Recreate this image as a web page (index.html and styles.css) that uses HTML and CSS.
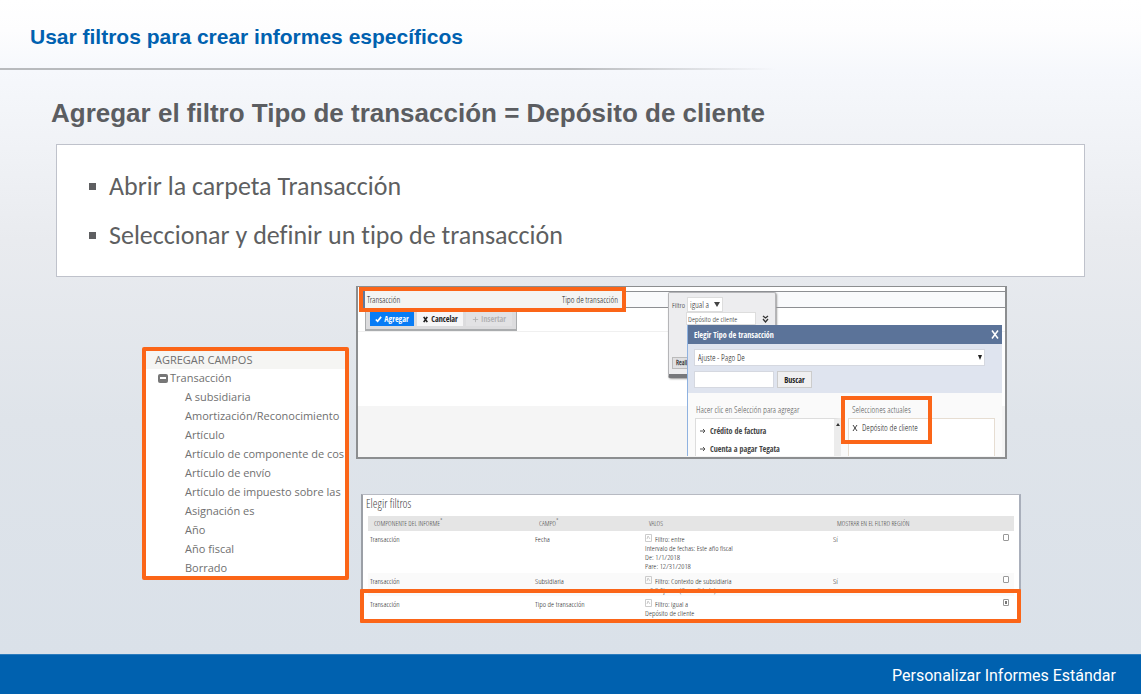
FILE: index.html
```
<!DOCTYPE html>
<html lang="es">
<head>
<meta charset="utf-8">
<meta name="viewport" content="width=device-width, initial-scale=1">
<title>Usar filtros para crear informes específicos</title>
<link rel="stylesheet" href="styles.css">
</head>
<body>
<div class="slide">
  <header class="slide-header">
    <h1 class="slide-title">Usar filtros para crear informes específicos</h1>
  </header>

  <main class="slide-body">
    <h2 class="topic">Agregar el filtro Tipo de transacción = Depósito de cliente</h2>
    <ul class="steps">
      <li>Abrir la carpeta Transacción</li>
      <li>Seleccionar y definir un tipo de transacción</li>
    </ul>

    <div class="figures">
      <section class="fields">
        <h3 class="fields-title">AGREGAR CAMPOS</h3>
        <button class="folder" type="button" aria-expanded="true">
          <svg class="folder-icon" viewBox="0 0 10 9" aria-hidden="true"><rect width="10" height="9" rx="2" fill="#777"/><rect x="2" y="3" width="6" height="2" fill="#fff"/></svg>
          Transacción
        </button>
        <ul class="field-list">
          <li>A subsidiaria</li>
          <li>Amortización/Reconocimiento</li>
          <li>Artículo</li>
          <li>Artículo de componente de cos</li>
          <li>Artículo de envío</li>
          <li>Artículo de impuesto sobre las</li>
          <li>Asignación es</li>
          <li>Año</li>
          <li>Año fiscal</li>
          <li>Borrado</li>
        </ul>
      </section>

      <div class="shots">
        <section class="editor">
          <div class="editor-row">
            <div class="row-highlight"><span>Transacción</span><span>Tipo de transacción</span></div>
            <div class="row-rest"></div>
          </div>
          <div class="toolbar">
            <button class="tool tool-primary" type="button"><svg class="tool-icon" viewBox="0 0 8 8" aria-hidden="true"><path d="M1 4l2 2 4-5" fill="none" stroke="currentColor" stroke-width="2"/></svg>Agregar</button>
            <button class="tool" type="button"><svg class="tool-icon" viewBox="0 0 8 8" aria-hidden="true"><path d="M2 1l4 6M6 1L2 7" fill="none" stroke="currentColor" stroke-width="2"/></svg>Cancelar</button>
            <button class="tool" type="button" disabled><svg class="tool-icon" viewBox="0 0 8 8" aria-hidden="true"><path d="M4 1v6M1 4h6" fill="none" stroke="currentColor"/></svg>Insertar</button>
          </div>
          <div class="editor-blank"></div>
          <div class="editor-base"></div>

          <div class="filter-popup">
            <div class="filter-line">
              <label for="operator">Filtro</label>
              <div class="pick"><select id="operator" class="operator"><option>igual a</option></select><svg class="pick-arrow" viewBox="0 0 6 5" aria-hidden="true"><path d="M0 0h6L3 5z" fill="#444"/></svg></div>
            </div>
            <div class="value-line">
              <input class="filter-value" type="text" value="Depósito de cliente" aria-label="Valor del filtro">
              <svg class="chevrons" viewBox="0 0 7 8" aria-hidden="true"><path d="M1 1l2.500 2L6 1M1 4l2.500 3L6 4" fill="none" stroke="#333" stroke-width="1.300"/></svg>
            </div>
            <button class="popup-button" type="button">Realizar</button>
          </div>

          <div class="dialog" role="dialog" aria-labelledby="dialog-title">
            <div class="dialog-bar">
              <h3 class="dialog-title" id="dialog-title">Elegir Tipo de transacción</h3>
              <button class="close" type="button" aria-label="Cerrar"><svg class="close-icon" viewBox="0 0 8 8" aria-hidden="true"><path d="M1 0l6 8M7 0L1 8" stroke="#fff" stroke-width="1.500"/></svg></button>
            </div>
            <div class="dialog-search">
              <div class="pick"><select class="type-select" aria-label="Tipo"><option>Ajuste - Pago De</option></select><svg class="type-arrow" viewBox="0 0 4 5" aria-hidden="true"><path d="M0 0h4L2 5z" fill="#222"/></svg></div>
              <div class="search-line"><input class="search" type="text" aria-label="Buscar tipo"><button class="search-button" type="button">Buscar</button></div>
            </div>
            <div class="dialog-lists">
              <div class="available">
                <h4 class="list-title">Hacer clic en Selección para agregar</h4>
                <ul class="options">
                  <li><svg class="mark" viewBox="0 0 6 6" aria-hidden="true"><path d="M0 3h5M3 1l2 2-2 2" fill="none" stroke="#555"/></svg>Crédito de factura</li>
                  <li><svg class="mark" viewBox="0 0 6 6" aria-hidden="true"><path d="M0 3h5M3 1l2 2-2 2" fill="none" stroke="#555"/></svg>Cuenta a pagar Tegata</li>
                </ul>
                <svg class="scroll-arrow" viewBox="0 0 4 3" aria-hidden="true"><path d="M0 3h4L2 0z" fill="#333"/></svg>
              </div>
              <div class="selected">
                <h4 class="list-title">Selecciones actuales</h4>
                <ul class="selections"><li><svg class="mark" viewBox="0 0 6 6" aria-hidden="true"><path d="M1 0l4 6M5 0L1 6" stroke="#444"/></svg>Depósito de cliente</li></ul>
                <div class="selected-frame"></div>
              </div>
            </div>
          </div>
        </section>

        <section class="filters">
          <h3 class="filters-title">Elegir filtros</h3>
          <table class="filter-table">
            <thead><tr><th class="col-component">COMPONENTE DEL INFORME<sup>*</sup></th><th class="col-field">CAMPO<sup>*</sup></th><th class="col-values">VALOS</th><th class="col-region">MOSTRAR EN EL FILTRO REGIÓN</th><th class="col-check"></th></tr></thead>
            <tbody>
              <tr class="row-date"><td>Transacción</td><td>Fecha</td><td><svg class="edit" viewBox="0 0 7 8" aria-hidden="true"><path d="M.5.5h6v7h-6zM2 5l1-3 2 3" fill="none" stroke="#ccc"/></svg>Filtro: entre<br>Intervalo de fechas: Este año fiscal<br>De: 1/1/2018<br>Pare: 12/31/2018</td><td>Sí</td><td><input class="tick" type="checkbox" aria-label="Fecha"></td></tr>
              <tr class="row-sub"><td>Transacción</td><td>Subsidiaria</td><td><svg class="edit" viewBox="0 0 7 8" aria-hidden="true"><path d="M.5.5h6v7h-6zM2 5l1-3 2 3" fill="none" stroke="#ccc"/></svg>Filtro: Contexto de subsidiaria<br>&lt; C-S-Ejem &gt; (Consolidado)</td><td>Sí</td><td><input class="tick" type="checkbox" aria-label="Subsidiaria"></td></tr>
              <tr class="row-type"><td>Transacción</td><td>Tipo de transacción</td><td><svg class="edit" viewBox="0 0 7 8" aria-hidden="true"><path d="M.5.5h6v7h-6zM2 5l1-3 2 3" fill="none" stroke="#ccc"/></svg>Filtro: igual a<br>Depósito de cliente</td><td></td><td><input class="tick" type="checkbox" checked aria-label="Tipo de transacción"></td></tr>
            </tbody>
          </table>
          <div class="filters-frame"></div>
        </section>
      </div>
    </div>
  </main>

  <footer class="slide-footer">Personalizar Informes Estándar</footer>
</div>
</body>
</html>
```
FILE: styles.css
```
* { box-sizing: border-box; }

body, h1, h2, h3, h4, ul { margin: 0; padding: 0; }
ul { list-style: none; }
svg { display: block; flex: none; }
button, input, select { font: inherit; color: inherit; margin: 0; }

.slide {
  display: flex;
  flex-direction: column;
  min-height: 100vh;
  font-family: "Open Sans", "Noto Sans", sans-serif;
  color: #58595b;
  background: linear-gradient(#ffffff 0, #fdfdfe 30px, #f6f8fc 70px, #e9ebef 240px, #dfe4ea 420px, #dae1e9 654px);
}

.slide-header {
  display: flex;
  align-items: center;
  height: 70px;
  padding: 6px 30px 0;
  border-bottom: 2px solid;
  border-image: linear-gradient(90deg, #b8babd 0, #b8babd 50%, transparent 68%) 1;
}
.slide-title {
  font: 700 21px/28px "Liberation Sans", Arial, sans-serif;
  color: #0061b0;
}

.slide-body { flex: 1; }
.topic {
  padding: 27px 51px 15px;
  font: 700 26px/32px "Liberation Sans", Arial, sans-serif;
  color: #5b5d61;
}

.steps {
  display: grid;
  gap: 17px;
  margin: 0 56px;
  padding: 25px 32px 25px;
  background: #fff;
  border: 1px solid #bfc2cb;
  font: 26px/32px Carlito, "Open Sans", sans-serif;
  font-variant-ligatures: none;
  color: #5e5f61;
}
.steps li { display: flex; align-items: center; gap: 13px; }
.steps li::before { content: ""; width: 7px; height: 7px; background: #5e5f61; }

.figures {
  display: grid;
  grid-template-columns: 207px minmax(0, 1fr);
  gap: 7px;
  align-items: start;
  padding: 9px 120px 20px 142px;
}

/* Field tree */
.fields {
  margin-top: 61px;
  height: 233px;
  overflow: hidden;
  border: 4px solid #fb6518;
  border-radius: 2px;
  background: #fff;
  font-size: 11px;
  line-height: 19px;
  color: #707070;
}
.fields-title { padding-left: 9px; font-size: 11px; font-weight: 400; line-height: 18px; background: #f5f5f3; }
.folder {
  display: flex;
  align-items: center;
  gap: 2px;
  padding: 0 0 0 12px;
  border: 0;
  background: none;
  line-height: 18px;
}
.folder-icon { width: 10px; height: 9px; }
.field-list { padding-left: 39px; white-space: nowrap; }

.shots { display: grid; gap: 35px; min-width: 0; }

/* Filter editor */
.editor {
  position: relative;
  display: flex;
  flex-direction: column;
  height: 173px;
  margin-right: 14px;
  border: 2px solid #8c8e90;
  border-top-width: 1px;
  overflow: hidden;
  background: #fff;
  font: 400 9px/10px "Open Sans Condensed Light", "Roboto Condensed", "Open Sans", sans-serif;
  color: #222;
}
.editor-row { display: flex; align-items: center; }
.row-highlight {
  display: flex;
  align-items: center;
  justify-content: space-between;
  width: 267px;
  height: 25px;
  margin-left: 1px;
  padding: 0 4px;
  border: 4px solid #fb6518;
  background: #f4f4f2;
  box-shadow: inset 2px 0 #60799b;
}
.row-rest { flex: 1; height: 17px; border: solid #8d8f93; border-width: 1px 0; background: #f9fafc; }
.toolbar {
  display: flex;
  align-self: flex-start;
  gap: 3px;
  margin-left: 7px;
  padding: 0 4px 3px;
  border: solid #aaacae;
  border-width: 0 1px 2px;
  background: #dcdcde;
}
.tool {
  display: flex;
  align-items: center;
  justify-content: center;
  gap: 2px;
  width: 46px;
  height: 14px;
  padding: 0;
  border: 0;
  background: #f6f6f7;
  font: 700 8px/10px "Open Sans Condensed", "Open Sans", sans-serif;
}
.tool-primary { width: 44px; color: #fff; background: #087cf5; }
.tool:disabled { color: #b2b2b4; background: #e2e2e4; }
.tool-icon { width: 7px; height: 7px; }
.editor-blank { height: 75px; border-top: 1px solid #f0f0f0; }
.editor-base { flex: 1; background: #f5f5f5; }

.filter-popup {
  position: absolute;
  top: 5px;
  right: 229px;
  width: 108px;
  height: 86px;
  padding: 4px 3px;
  background: #ededef;
  border: 1px solid #b5b5b8;
  border-bottom: 4px solid #77787b;
  border-radius: 2px;
  box-shadow: 1px 1px 2px #999;
}
.filter-line { display: flex; align-items: center; justify-content: space-between; width: 51px; font-size: 8px; }
.pick { position: relative; display: flex; }
.operator {
  appearance: none;
  width: 36px;
  height: 15px;
  padding: 0 0 0 2px;
  border: 1px solid #ddd;
  background: #fff;
  font-size: 9px;
}
.pick-arrow { position: absolute; top: 5px; right: 3px; width: 6px; height: 5px; }
.value-line { display: flex; align-items: center; gap: 6px; padding: 0 0 0 14px; font-size: 8px; }
.filter-value { width: 70px; height: 13px; padding: 0 1px; border: 1px solid #ddd; background: #fff; }
.chevrons { width: 7px; height: 8px; }
.popup-button {
  margin-top: 32px;
  height: 12px;
  padding: 0 3px;
  border: 1px solid #bbb;
  background: #e0e0e2;
  font-size: 7px;
  font-weight: 700;
  line-height: 8px;
}

.dialog {
  position: absolute;
  top: 38px;
  right: 3px;
  width: 315px;
  height: 131px;
  overflow: hidden;
  border-left: 1px solid #8fb2e0;
  background: #fafafa;
}
.dialog-bar { display: flex; align-items: center; justify-content: space-between; height: 19px; padding: 0 3px 0 6px; background: #5b7399; }
.dialog-title { font: 700 8px/10px "Open Sans Condensed", "Open Sans", sans-serif; color: #fff; }
.close { padding: 0; border: 0; background: none; }
.close-icon { width: 8px; height: 9px; }
.dialog-search { display: grid; gap: 5px; padding: 5px 17px 5px 6px; background: #dfe4ef; }
.type-select { appearance: none; width: 100%; height: 17px; padding: 0 3px; border: 1px solid #d5d8e0; background: #fff; }
.type-arrow { position: absolute; top: 6px; right: 3px; width: 4px; height: 5px; }
.search-line { display: flex; gap: 3px; }
.search { width: 80px; height: 17px; border: 1px solid #d5d8e0; background: #fff; }
.search-button { width: 35px; height: 17px; padding: 0; border: 1px solid #ccc; background: #f0f0f1; font: 700 8px/10px "Open Sans Condensed", "Open Sans", sans-serif; }
.dialog-lists { display: grid; grid-template-columns: 146px minmax(0, 1fr); gap: 7px; padding: 12px 7px 0; }
.available, .selected { position: relative; }
.list-title { padding: 0 1px 3px; font-size: 9px; font-weight: 400; color: #555; }
.selected .list-title { padding-left: 4px; }
.options, .selections { height: 60px; border: 1px solid #ddd; background: #fff; }
.options { padding: 3px 4px 0; border-right: 7px solid #ececec; font: 8px/10px "Open Sans Condensed", "Open Sans", sans-serif; color: #444; }
.options li, .selections li { display: flex; align-items: center; gap: 4px; height: 18px; }
.selections { padding: 0 3px; border-color: #e6ddd2; }
.mark { width: 6px; height: 6px; }
.scroll-arrow { position: absolute; top: 18px; right: 1px; width: 4px; height: 3px; }
.selected-frame { position: absolute; top: -9px; left: -7px; width: 91px; height: 48px; border: 4px solid #fb6518; }

/* Filter list */
.filters {
  position: relative;
  margin-left: 5px;
  border: 1px solid #b7bac2;
  border-right: 2px solid #a9afbb;
  border-left: 2px solid #9b9fa6;
  background: #fff;
  font: 400 8px/9px "Open Sans Condensed Light", "Roboto Condensed", "Open Sans", sans-serif;
  color: #222;
}
.filters-title { padding: 1px 3px 4px; font-size: 12px; font-weight: 400; line-height: 16px; color: #444; }
.filter-table { width: calc(100% - 10px); margin-left: 5px; table-layout: fixed; border-collapse: collapse; }
.filter-table th { height: 15px; padding: 0 6px; background: #e5e5e5; font-size: 7px; font-weight: 400; line-height: 8px; text-align: left; color: #444; }
.filter-table sup { font-size: 7px; line-height: 0; }
.filter-table td { padding: 3px 2px 0; vertical-align: top; line-height: 9px; }
.filter-table .col-component { width: 165px; }
.filter-table .col-field { width: 110px; }
.filter-table .col-values { width: 188px; }
.filter-table .col-check { width: 13px; padding: 0; }
.row-date { height: 42px; }
.row-sub { height: 23px; background: #fafafa; }
.row-type { height: 25px; }
.edit { display: inline-block; width: 7px; height: 8px; margin-right: 3px; }
.tick { appearance: none; display: block; width: 6px; height: 7px; border: 1px solid #999; border-radius: 1px; background: #fff; }
.tick:checked { background: #777; box-shadow: inset 0 0 0 1px #fff; }
.filters-frame { position: absolute; right: -2px; bottom: -2px; left: -3px; height: 34px; border: 4px solid #fb6518; border-radius: 1px; }

.slide-footer {
  display: flex;
  align-items: center;
  justify-content: flex-end;
  height: 40px;
  padding: 3px 25px 0;
  background: #0061af;
  border-top: 1px solid #2c7cbd;
  color: #fff;
  font: 16px/20px Roboto, "Open Sans", sans-serif;
}
```
